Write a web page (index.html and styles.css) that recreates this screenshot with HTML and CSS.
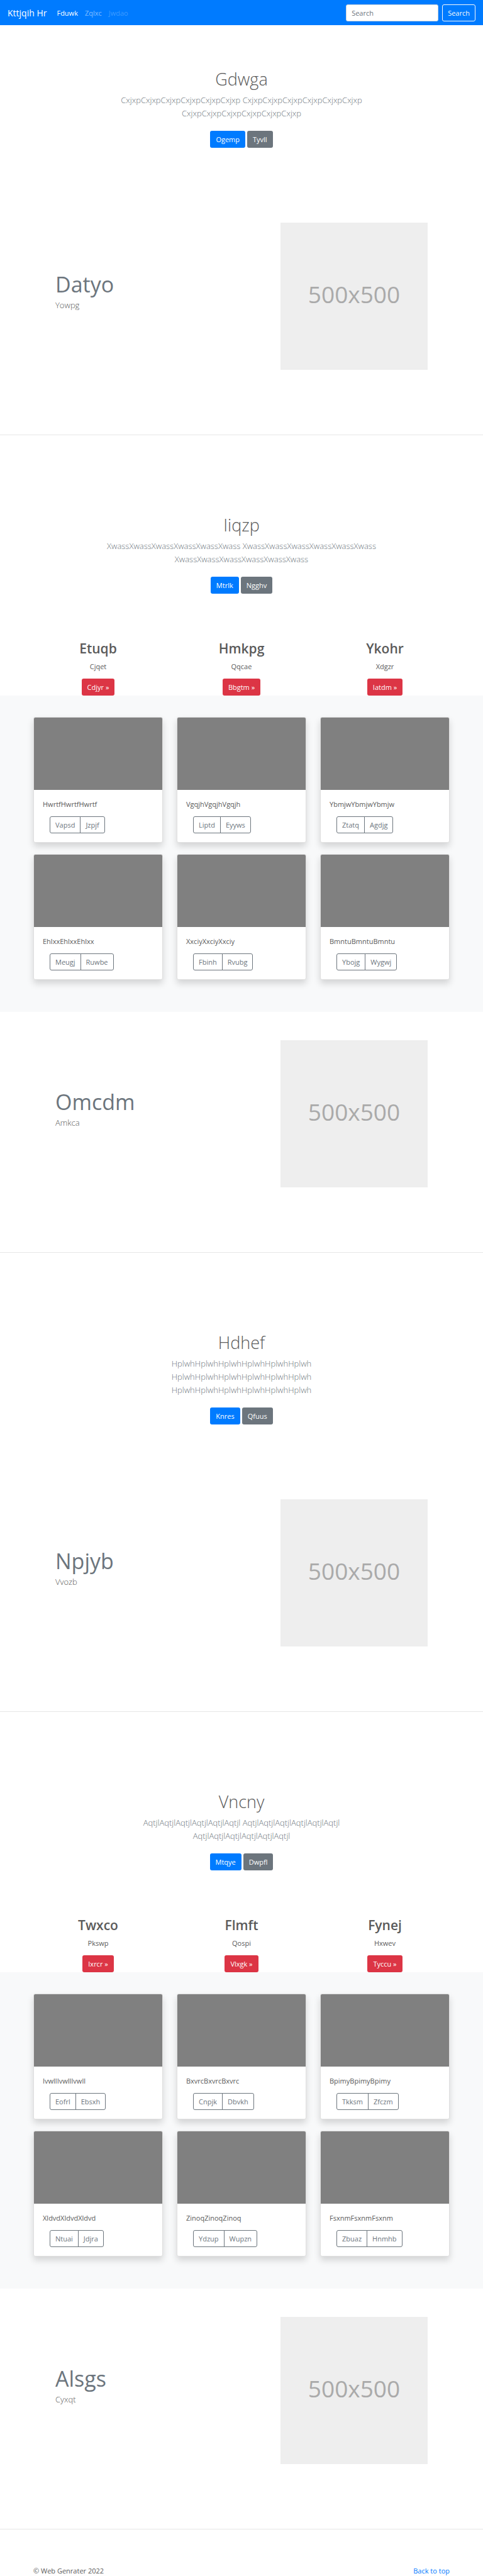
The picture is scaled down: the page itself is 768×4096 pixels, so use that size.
FILE: index.html
```html
<!DOCTYPE html>
<html lang="en">
<head>
<meta charset="utf-8">
<meta name="viewport" content="width=device-width, initial-scale=1">
<title>Kttjqih Hr</title>
<link rel="stylesheet" href="styles.css">
</head>
<body id="top">
<header class="navbar">
  <a class="brand" href="#top">Kttjqih Hr</a>
  <nav class="nav">
    <a class="nav-link active" href="#">Fduwk</a>
    <a class="nav-link" href="#">Zqlxc</a>
    <a class="nav-link disabled" href="#">Jwdao</a>
  </nav>
  <form class="search">
    <input class="search-input" type="text" placeholder="Search" aria-label="Search">
    <button class="btn btn-outline-light" type="button">Search</button>
  </form>
</header>
<main>
  <section class="hero">
    <h1 class="hero-title">Gdwga</h1>
    <p class="lead">CxjxpCxjxpCxjxpCxjxpCxjxpCxjxp CxjxpCxjxpCxjxpCxjxpCxjxpCxjxp<br>CxjxpCxjxpCxjxpCxjxpCxjxpCxjxp</p>
    <div class="actions"><a class="btn btn-primary" href="#">Ogemp</a><a class="btn btn-secondary" href="#">Tyvll</a></div>
  </section>
  <section class="feature">
    <div class="feature-text"><h2 class="feature-title">Datyo</h2><p class="feature-lead">Yowpg</p></div>
    <div class="placeholder">500x500</div>
  </section>
  <hr class="divider">

  <section class="hero">
    <h1 class="hero-title">Iiqzp</h1>
    <p class="lead">XwassXwassXwassXwassXwassXwass XwassXwassXwassXwassXwassXwass<br>XwassXwassXwassXwassXwassXwass</p>
    <div class="actions"><a class="btn btn-primary" href="#">Mtrlk</a><a class="btn btn-secondary" href="#">Ngghv</a></div>
  </section>
  <section class="columns">
    <div class="column"><h2 class="column-title">Etuqb</h2><p class="column-text">Cjqet</p><a class="btn btn-danger" href="#">Cdjyr »</a></div>
    <div class="column"><h2 class="column-title">Hmkpg</h2><p class="column-text">Qqcae</p><a class="btn btn-danger" href="#">Bbgtm »</a></div>
    <div class="column"><h2 class="column-title">Ykohr</h2><p class="column-text">Xdgzr</p><a class="btn btn-danger" href="#">Iatdm »</a></div>
  </section>
  <section class="album">
    <article class="card"><div class="card-image"></div><div class="card-body"><p class="card-text">HwrtfHwrtfHwrtf</p><div class="btn-group"><button class="btn btn-outline" type="button">Vapsd</button><button class="btn btn-outline" type="button">Jzpjf</button></div></div></article>
    <article class="card"><div class="card-image"></div><div class="card-body"><p class="card-text">VgqjhVgqjhVgqjh</p><div class="btn-group"><button class="btn btn-outline" type="button">Liptd</button><button class="btn btn-outline" type="button">Eyyws</button></div></div></article>
    <article class="card"><div class="card-image"></div><div class="card-body"><p class="card-text">YbmjwYbmjwYbmjw</p><div class="btn-group"><button class="btn btn-outline" type="button">Ztatq</button><button class="btn btn-outline" type="button">Agdjg</button></div></div></article>
    <article class="card"><div class="card-image"></div><div class="card-body"><p class="card-text">EhlxxEhlxxEhlxx</p><div class="btn-group"><button class="btn btn-outline" type="button">Meugj</button><button class="btn btn-outline" type="button">Ruwbe</button></div></div></article>
    <article class="card"><div class="card-image"></div><div class="card-body"><p class="card-text">XxciyXxciyXxciy</p><div class="btn-group"><button class="btn btn-outline" type="button">Fbinh</button><button class="btn btn-outline" type="button">Rvubg</button></div></div></article>
    <article class="card"><div class="card-image"></div><div class="card-body"><p class="card-text">BmntuBmntuBmntu</p><div class="btn-group"><button class="btn btn-outline" type="button">Ybojg</button><button class="btn btn-outline" type="button">Wygwj</button></div></div></article>
  </section>
  <section class="feature">
    <div class="feature-text"><h2 class="feature-title">Omcdm</h2><p class="feature-lead">Amkca</p></div>
    <div class="placeholder">500x500</div>
  </section>
  <hr class="divider">

  <section class="hero">
    <h1 class="hero-title">Hdhef</h1>
    <p class="lead">HplwhHplwhHplwhHplwhHplwhHplwh<br>HplwhHplwhHplwhHplwhHplwhHplwh<br>HplwhHplwhHplwhHplwhHplwhHplwh</p>
    <div class="actions"><a class="btn btn-primary" href="#">Knres</a><a class="btn btn-secondary" href="#">Qfuus</a></div>
  </section>
  <section class="feature">
    <div class="feature-text"><h2 class="feature-title">Npjyb</h2><p class="feature-lead">Vvozb</p></div>
    <div class="placeholder">500x500</div>
  </section>
  <hr class="divider">

  <section class="hero">
    <h1 class="hero-title">Vncny</h1>
    <p class="lead">AqtjlAqtjlAqtjlAqtjlAqtjlAqtjl AqtjlAqtjlAqtjlAqtjlAqtjlAqtjl<br>AqtjlAqtjlAqtjlAqtjlAqtjlAqtjl</p>
    <div class="actions"><a class="btn btn-primary" href="#">Mtqye</a><a class="btn btn-secondary" href="#">Dwpfl</a></div>
  </section>
  <section class="columns">
    <div class="column"><h2 class="column-title">Twxco</h2><p class="column-text">Pkswp</p><a class="btn btn-danger" href="#">Ixrcr »</a></div>
    <div class="column"><h2 class="column-title">Flmft</h2><p class="column-text">Qospi</p><a class="btn btn-danger" href="#">Vlxgk »</a></div>
    <div class="column"><h2 class="column-title">Fynej</h2><p class="column-text">Hxwev</p><a class="btn btn-danger" href="#">Tyccu »</a></div>
  </section>
  <section class="album">
    <article class="card"><div class="card-image"></div><div class="card-body"><p class="card-text">IvwllIvwllIvwll</p><div class="btn-group"><button class="btn btn-outline" type="button">Eofrl</button><button class="btn btn-outline" type="button">Ebsxh</button></div></div></article>
    <article class="card"><div class="card-image"></div><div class="card-body"><p class="card-text">BxvrcBxvrcBxvrc</p><div class="btn-group"><button class="btn btn-outline" type="button">Cnpjk</button><button class="btn btn-outline" type="button">Dbvkh</button></div></div></article>
    <article class="card"><div class="card-image"></div><div class="card-body"><p class="card-text">BpimyBpimyBpimy</p><div class="btn-group"><button class="btn btn-outline" type="button">Tkksm</button><button class="btn btn-outline" type="button">Zfczm</button></div></div></article>
    <article class="card"><div class="card-image"></div><div class="card-body"><p class="card-text">XldvdXldvdXldvd</p><div class="btn-group"><button class="btn btn-outline" type="button">Ntuai</button><button class="btn btn-outline" type="button">Jdjra</button></div></div></article>
    <article class="card"><div class="card-image"></div><div class="card-body"><p class="card-text">ZinoqZinoqZinoq</p><div class="btn-group"><button class="btn btn-outline" type="button">Ydzup</button><button class="btn btn-outline" type="button">Wupzn</button></div></div></article>
    <article class="card"><div class="card-image"></div><div class="card-body"><p class="card-text">FsxnmFsxnmFsxnm</p><div class="btn-group"><button class="btn btn-outline" type="button">Zbuaz</button><button class="btn btn-outline" type="button">Hnmhb</button></div></div></article>
  </section>
  <section class="feature">
    <div class="feature-text"><h2 class="feature-title">Alsgs</h2><p class="feature-lead">Cyxqt</p></div>
    <div class="placeholder">500x500</div>
  </section>
  <hr class="divider">
</main>
<footer class="footer">
  <span>© Web Genrater 2022</span>
  <a class="footer-link" href="#top">Back to top</a>
</footer>
</body>
</html>
```
FILE: styles.css
```css
* { box-sizing: border-box; }
body {
  margin: 0;
  background: #fff;
  color: #5a5a5a;
  font: 400 11px/17px "Open Sans", "Noto Sans", sans-serif;
}
h1, h2, p { margin: 0; }
a { text-decoration: none; }

.navbar {
  display: flex;
  align-items: center;
  height: 40px;
  padding: 0 12px;
  background: #007bff;
}
.brand { margin-right: 16px; color: #fff; font-size: 14px; line-height: 21px; }
.nav { display: flex; gap: 11px; }
.nav-link { color: rgba(255, 255, 255, .5); }
.nav-link.active { color: #fff; }
.nav-link.disabled { color: rgba(255, 255, 255, .25); }
.search { display: flex; gap: 6px; margin-left: auto; }
.search-input {
  width: 147px;
  height: 27px;
  padding: 0 8px;
  border: 1px solid #ced4da;
  border-radius: 3px;
  background: #fff;
  color: #495057;
  font: inherit;
}
.search-input::placeholder { color: #6c757d; opacity: 1; }

.btn {
  display: inline-block;
  height: 27px;
  padding: 4px 8px;
  border: 1px solid transparent;
  border-radius: 3px;
  background: transparent;
  font: inherit;
  text-align: center;
}
.btn-primary { background: #007bff; color: #fff; }
.btn-secondary { background: #6c757d; color: #fff; }
.btn-danger { background: #dc3545; color: #fff; }
.btn-outline-light { border-color: #f8f9fa; color: #f8f9fa; }
.btn-outline { border-color: #6c757d; color: #6c757d; }

.hero { padding: 69px 16px 74px; text-align: center; }
.hero-title { margin-bottom: 6px; font-size: 27px; font-weight: 300; line-height: 34px; }
.lead { margin-bottom: 17px; color: #6c757d; font-size: 13px; font-weight: 300; line-height: 21px; }
.actions { display: flex; justify-content: center; gap: 3px; }

.feature {
  display: flex;
  justify-content: space-between;
  padding: 45px 88px 46px;
}
.feature-text { padding-top: 76px; }
.feature-title { color: #6c757d; font-size: 34px; font-weight: 400; line-height: 45px; }
.feature-lead { font-size: 13px; font-weight: 300; line-height: 21px; }
.placeholder {
  display: grid;
  place-items: center;
  width: 234px;
  aspect-ratio: 1;
  padding-bottom: 6px;
  background: #eee;
  color: #aaa;
  font-size: 37px;
  line-height: 48px;
}
.divider { margin: 57px 0; border: 0; border-top: 1px solid #e6e6e6; }

.columns {
  display: grid;
  grid-template-columns: repeat(3, 1fr);
  column-gap: 22px;
  padding: 0 53px;
  text-align: center;
}
.column { display: flex; flex-direction: column; align-items: center; }
.column-title { margin-bottom: 6px; font-size: 21px; font-weight: 600; line-height: 27px; }
.column-text { margin-bottom: 11px; }

.album {
  display: grid;
  grid-template-columns: repeat(3, 1fr);
  gap: 18px 22px;
  padding: 34px 53px 51px;
  background: #f8f9fa;
}
.card {
  border: 1px solid #dfdfdf;
  border-radius: 3px;
  background: #fff;
  box-shadow: 0 6px 11px rgba(0, 0, 0, .15);
}
.card-image { height: 115px; border-radius: 2px 2px 0 0; background: #808080; }
.card-body { padding: 14px; }
.card-text { margin-bottom: 11px; }
.btn-group { display: flex; padding-left: 11px; }
.btn-group .btn:first-child { border-radius: 3px 0 0 3px; }
.btn-group .btn:last-child { margin-left: -1px; border-radius: 0 3px 3px 0; }

.footer { display: flex; justify-content: space-between; padding: 0 53px; }
.footer-link { color: #007bff; }
```
